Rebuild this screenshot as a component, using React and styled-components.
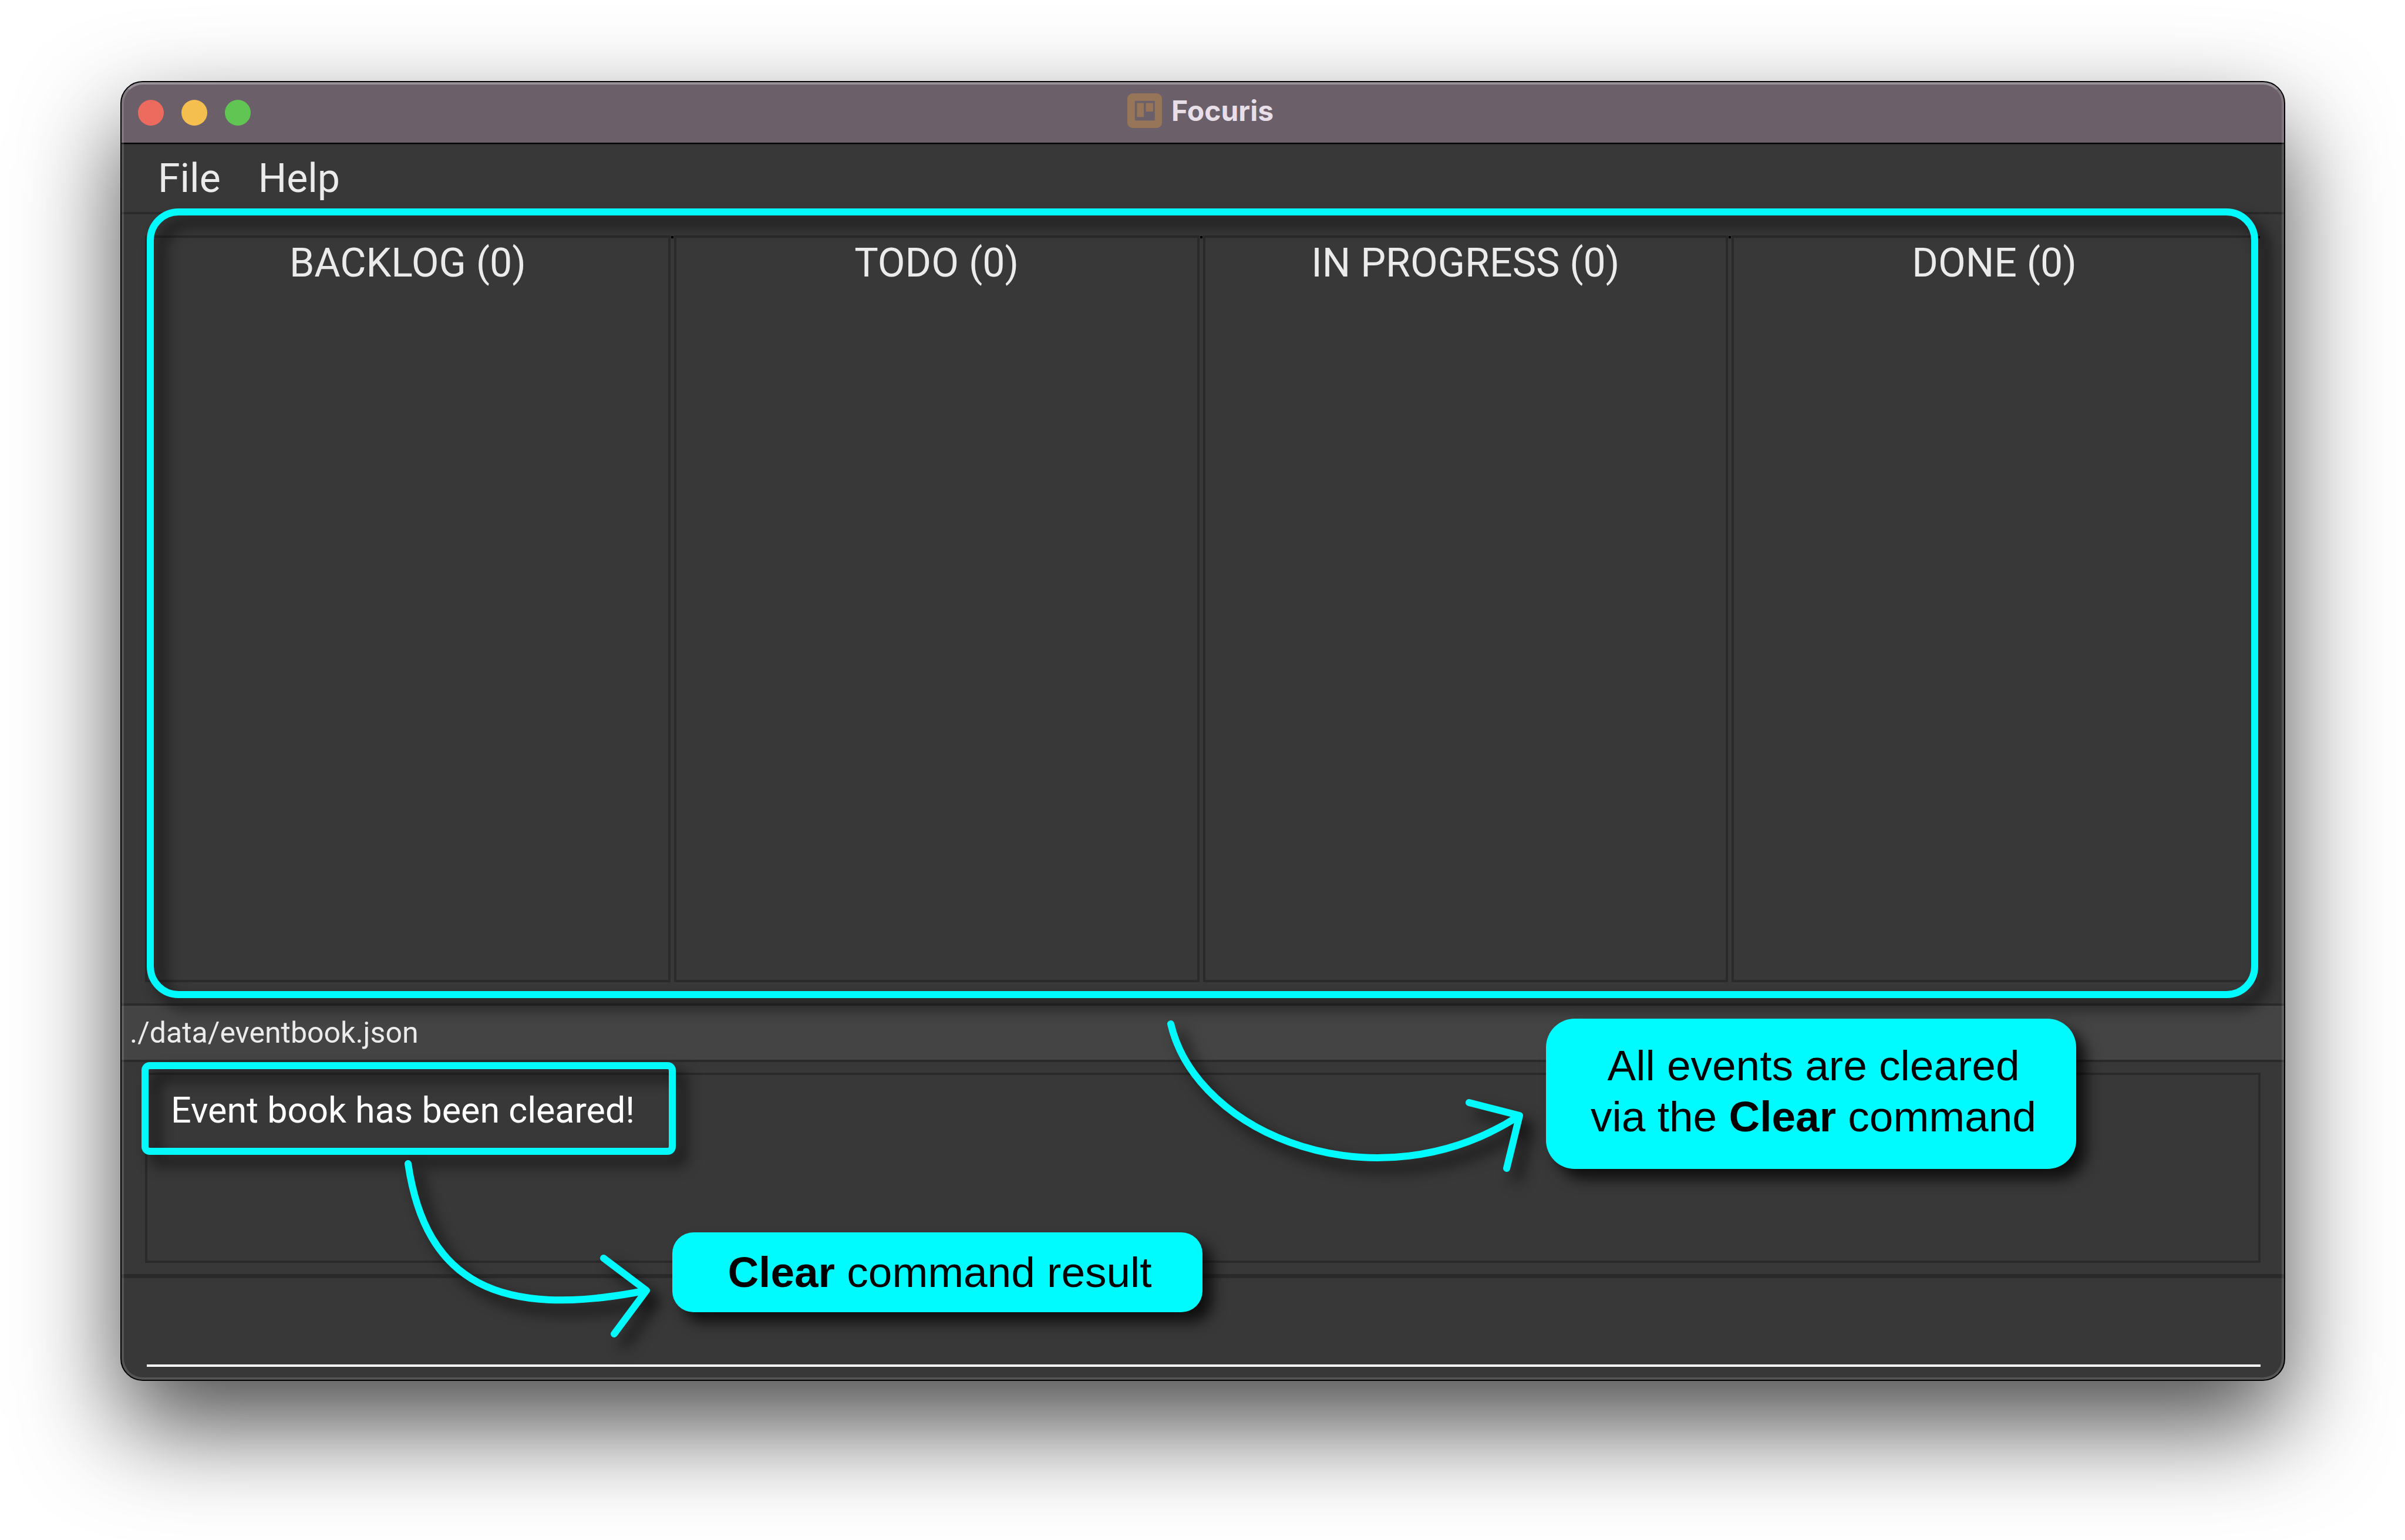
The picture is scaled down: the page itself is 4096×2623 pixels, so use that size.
import React from "react";
import styled, { createGlobalStyle } from "styled-components";

const color = {
  surface: "#383838",
  line: "#2a2a2a",
  status: "#444444",
  title: "#6b6069",
  text: "#ebebeb",
  accent: "#00fbff",
};

const GlobalStyle = createGlobalStyle`
  * { box-sizing: border-box; }
  body {
    margin: 0;
    background: #ffffff;
    font-family: Roboto, "Liberation Sans", sans-serif;
  }
`;

const Desktop = styled.div`
  display: flex;
  min-height: 100vh;
  padding: 138px 204px 271px 205px;
`;

const Window = styled.main`
  position: relative;
  display: flex;
  flex: 1;
  flex-direction: column;
  border: 2px solid #000000;
  border-radius: 38px;
  background: ${color.surface};
  color: ${color.text};
  box-shadow: 0 76px 170px rgba(0, 0, 0, 0.7);

  &::after {
    content: "";
    position: absolute;
    inset: 0;
    border: 4px solid rgba(255, 255, 255, 0.14);
    border-top-color: rgba(255, 255, 255, 0.3);
    border-radius: 36px;
    pointer-events: none;
  }
`;

const TitleBar = styled.header`
  display: grid;
  grid-template-columns: 1fr auto 1fr;
  align-items: center;
  height: 107px;
  padding: 0 28px 2px;
  border-bottom: 2px solid ${color.line};
  border-radius: 36px 36px 0 0;
  background: ${color.title};
  box-shadow: inset 0 -2px #000000;
`;

const Lights = styled.div`
  display: flex;
  gap: 30px;
`;

const Light = styled.button`
  width: 44px;
  height: 44px;
  padding: 0;
  border: 0;
  border-radius: 50%;
  background: ${(p) => p.$fill};
`;

const Title = styled.h1`
  display: flex;
  align-items: center;
  gap: 16px;
  margin: 0;
  padding: 0 8px 6px 0;
  color: #e8dee7;
  font: 700 48px/60px Inter, sans-serif;
`;

const MenuBar = styled.nav`
  display: flex;
  height: 118px;
  padding: 0 30px;
  border-bottom: 4px solid ${color.line};
`;

const MenuButton = styled.button`
  padding: 0 32px;
  border: 0;
  background: none;
  color: inherit;
  font: inherit;
  font-size: 68px;
`;

const Board = styled.section`
  position: relative;
  z-index: 1;
  display: grid;
  flex: 1;
  grid-template-columns: repeat(4, 1fr);
  padding: 36px 40px;
`;

const Column = styled.section`
  position: relative;
  margin-right: 6px;
  border: 4px solid ${color.line};

  &::after {
    content: "";
    position: absolute;
    top: -3px;
    right: -9px;
    width: 4px;
    height: 4px;
    background: #000000;
  }
`;

const ColumnTitle = styled.h2`
  margin: 0;
  font-size: 68px;
  font-weight: 400;
  line-height: 86px;
  text-align: center;
`;

const StatusBar = styled.footer`
  padding: 0 14px;
  border: solid ${color.line};
  border-width: 4px 0;
  background: ${color.status};
  font-size: 50px;
  line-height: 92px;
`;

const ResultPane = styled.section`
  padding: 18px 40px 19px;
  border-bottom: 7px solid ${color.line};
`;

const ResultBox = styled.div`
  min-height: 324px;
  padding: 18px 40px;
  border: 4px solid ${color.line};
`;

const Message = styled.output`
  position: relative;
  display: inline-block;
  color: #ffffff;
  font-size: 61px;
  line-height: 84px;
`;

const CommandInput = styled.input`
  height: 151px;
  margin: 0 40px 22px 43px;
  padding: 0;
  border: 0;
  border-bottom: 4px solid #ffffff;
  outline: 0;
  background: transparent;
  color: #ffffff;
  font: inherit;
  font-size: 61px;
`;

const Ring = styled.div`
  position: absolute;
  z-index: 2;
  border: 12px solid ${color.accent};
  filter: drop-shadow(17px 17px 12px rgba(0, 0, 0, 0.75));
  pointer-events: none;
`;

const BoardRing = styled(Ring)`
  inset: -10px 44px 9px 43px;
  border-radius: 54px;
`;

const MessageRing = styled(Ring)`
  inset: -40px -70px -34px -50px;
  border-radius: 14px;
`;

const Callout = styled.aside`
  position: absolute;
  z-index: 3;
  top: ${(p) => p.$top}px;
  left: ${(p) => p.$left}px;
  width: 903px;
  padding: ${(p) => p.$pad};
  border-radius: ${(p) => p.$radius}px;
  background: ${color.accent};
  color: #000000;
  font-family: "Liberation Sans", Arial, sans-serif;
  font-size: 73px;
  line-height: 87px;
  text-align: center;
  filter: drop-shadow(17px 17px 12px rgba(0, 0, 0, 0.75));
`;

const ArrowSvg = styled.svg`
  position: absolute;
  z-index: 3;
  top: ${(p) => p.$top}px;
  left: ${(p) => p.$left}px;
  overflow: visible;
  fill: none;
  stroke: ${color.accent};
  stroke-width: 12px;
  stroke-linecap: round;
  stroke-linejoin: round;
  filter: drop-shadow(17px 17px 12px rgba(0, 0, 0, 0.75));
  pointer-events: none;
`;

const columns = ["BACKLOG", "TODO", "IN PROGRESS", "DONE"];

function BoardIcon() {
  return (
    <svg width="59" height="59" viewBox="0 0 97 97" aria-hidden="true">
      <path
        fill="#967558"
        fillRule="evenodd"
        d="M15 0H82A15 15 0 0 1 97 15V82A15 15 0 0 1 82 97H15A15 15 0 0 1 0 82V15A15 15 0 0 1 15 0ZM21 21V76H77V21ZM27 27H46V66H27ZM52 27H72V51H52Z"
      />
    </svg>
  );
}

export default function App() {
  return (
    <>
      <GlobalStyle />
      <Desktop>
        <Window>
          <TitleBar>
            <Lights>
              <Light $fill="#ed6a5e" aria-label="Close" />
              <Light $fill="#f4bf4f" aria-label="Minimize" />
              <Light $fill="#61c554" aria-label="Zoom" />
            </Lights>
            <Title>
              <BoardIcon />
              Focuris
            </Title>
          </TitleBar>

          <MenuBar>
            <MenuButton>File</MenuButton>
            <MenuButton>Help</MenuButton>
          </MenuBar>

          <Board>
            {columns.map((name) => (
              <Column key={name}>
                <ColumnTitle>{name} (0)</ColumnTitle>
              </Column>
            ))}
            <BoardRing />
          </Board>

          <StatusBar>./data/eventbook.json</StatusBar>

          <ResultPane>
            <ResultBox>
              <Message>
                Event book has been cleared!
                <MessageRing />
              </Message>
            </ResultBox>
          </ResultPane>

          <CommandInput aria-label="Command" />

          <ArrowSvg $left={482} $top={1836} width="420" height="304" aria-hidden="true">
            <path d="M6 6C36 209 161 272 412 222M339 167L412 222L357 296" />
          </ArrowSvg>
          <ArrowSvg $left={1781} $top={1598} width="606" height="262" aria-hidden="true">
            <path d="M6 6C51 197 359 319 600 162M514 140L600 162L578 252" />
          </ArrowSvg>

          <Callout $left={938} $top={1959} $pad="24px 32px 25px 40px" $radius={36}>
            <strong>Clear</strong> command result
          </Callout>
          <Callout $left={2426} $top={1595} $pad="36px 32px 46px 40px" $radius={49}>
            All events are cleared
            <br />
            via the <strong>Clear</strong> command
          </Callout>
        </Window>
      </Desktop>
    </>
  );
}
